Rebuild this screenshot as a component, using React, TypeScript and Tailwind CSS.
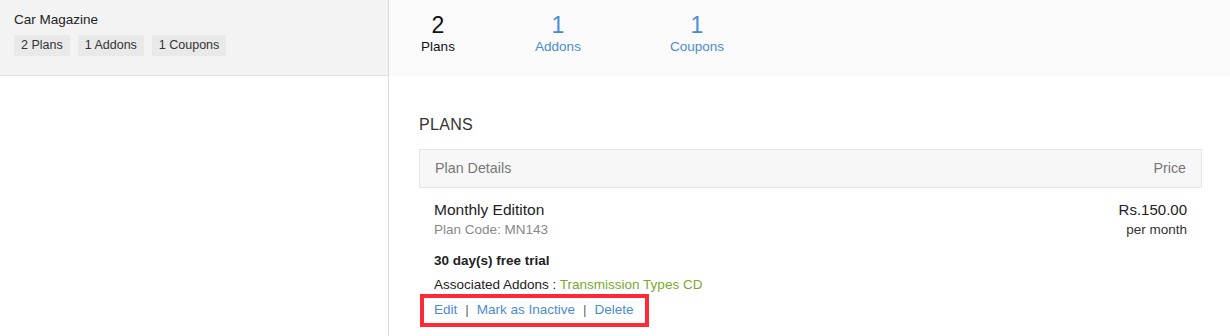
import React from 'react';

const stats = [
  { count: 2, label: 'Plans', active: true, cls: 'ml-[9px] w-[80px]' },
  { count: 1, label: 'Addons', active: false, cls: 'ml-[40px] w-[80px]' },
  { count: 1, label: 'Coupons', active: false, cls: 'ml-[59px] w-[80px]' },
];

const App: React.FC = () => {
  return (
    <div
      className="flex w-[1230px] h-[336px] bg-white text-[#222] overflow-hidden"
      style={{ fontFamily: '"Liberation Sans", Arial, sans-serif' }}
    >
      {/* left list */}
      <div className="w-[389px] shrink-0 border-r border-[#dcdcdc]">
        <div className="h-[76px] bg-[#f3f3f3] border-b border-[#e2e2e2] px-[14px] pt-[12px]">
          <div className="text-[13.5px] leading-[16px] text-[#222]">Car Magazine</div>
          <div className="flex gap-2 mt-[7px]">
            {['2 Plans', '1 Addons', '1 Coupons'].map((chip) => (
              <span
                key={chip}
                className="bg-[#e9e9e9] px-[7px] h-[21px] leading-[21px] text-[12.5px] text-[#333]"
              >
                {chip}
              </span>
            ))}
          </div>
        </div>
      </div>

      {/* detail */}
      <div className="flex-1">
        <div className="h-[76px] bg-[#fafafa] flex pt-[12px]">
          {stats.map((s) => (
            <div key={s.label} className={`${s.cls} text-center`}>
              <div
                className={`text-[23px] leading-[26px] ${s.active ? 'text-[#111]' : 'text-[#4a8cd4]'}`}
              >
                {s.count}
              </div>
              <div
                className={`text-[13.5px] leading-[16px] mt-[1px] ${s.active ? 'text-[#111]' : 'text-[#4a8cd4]'}`}
              >
                {s.label}
              </div>
            </div>
          ))}
        </div>

        <div className="pl-[30px] pr-[28px] pt-[39px]">
          <h2 className="text-[16px] leading-[20px] text-[#333] tracking-[0.3px]">PLANS</h2>

          <div className="mt-[14px] flex justify-between items-center h-[39px] bg-[#f7f7f7] border border-[#e6e6e6] px-[15px] text-[14.3px] text-[#777]">
            <span>Plan Details</span>
            <span>Price</span>
          </div>

          <div className="px-[15px] pt-[13px]">
            <div className="flex justify-between">
              <div>
                <div className="text-[15.5px] leading-[18px] text-[#222]">Monthly Edititon</div>
                <div className="text-[13.5px] leading-[16px] mt-[3px] text-[#888]">Plan Code: MN143</div>
              </div>
              <div className="text-right">
                <div className="text-[15px] leading-[18px] text-[#222]">Rs.150.00</div>
                <div className="text-[13.5px] leading-[16px] mt-[3px] text-[#333]">per month</div>
              </div>
            </div>

            <div className="mt-[15px] text-[13.5px] leading-[16px] font-semibold text-[#222]">
              30 day(s) free trial
            </div>
            <div className="mt-[8px] text-[13.5px] leading-[16px] text-[#222]">
              Associated Addons : <span className="text-[#7aa92f]">Transmission Types CD</span>
            </div>
          </div>

          <div className="ml-[1px] mt-[1px] inline-flex items-center h-[33px] border-[4px] border-[#ff2a36] pl-[10px] pr-[11px] text-[13.5px] text-[#4a8cd4]">
            <a href="#">Edit</a>
            <span className="mx-[8px] text-[#666]">|</span>
            <a href="#">Mark as Inactive</a>
            <span className="mx-[8px] text-[#666]">|</span>
            <a href="#">Delete</a>
          </div>
        </div>
      </div>
    </div>
  );
};

export default App;
